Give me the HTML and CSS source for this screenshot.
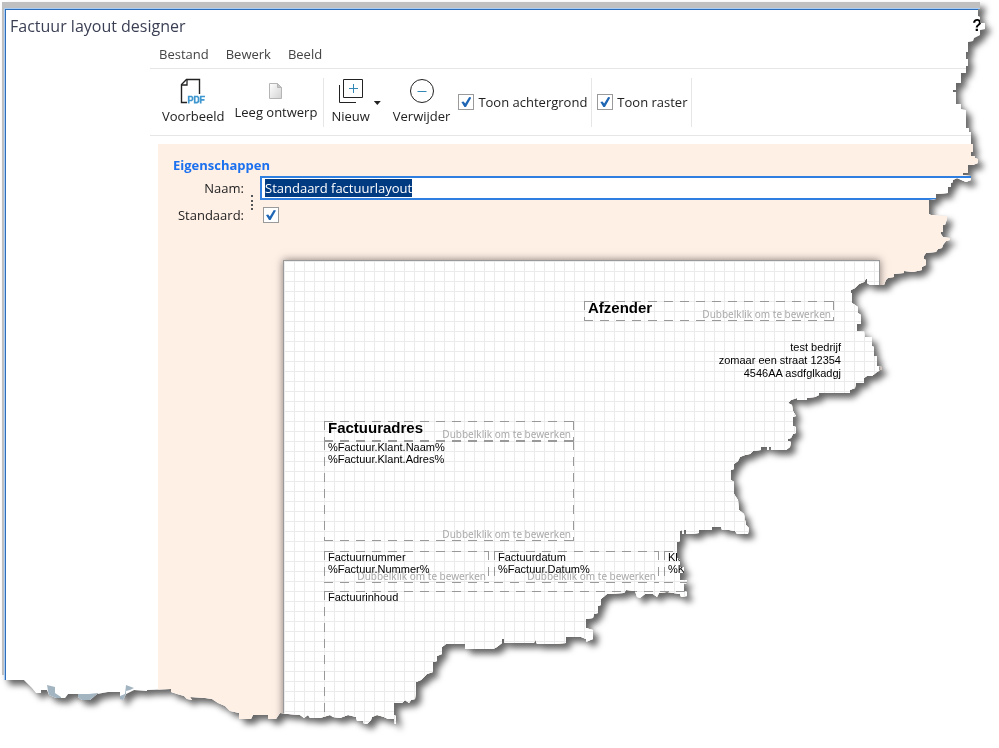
FILE: index.html
```html
<!DOCTYPE html>
<html lang="nl">
<head>
<meta charset="UTF-8">
<title>Factuur layout designer</title>
<link rel="stylesheet" href="styles.css">
</head>
<body>

<div class="shadow">
<div class="shell">
<div class="dialog">

  <header class="titlebar">
    <h1>Factuur layout designer</h1>
    <button class="help">?</button>
  </header>

  <main class="designer">
    <nav class="menu">
      <a href="#">Bestand</a>
      <a href="#">Bewerk</a>
      <a href="#">Beeld</a>
    </nav>

    <div class="toolbar">
      <div class="group group-file">
        <button class="tool">
          <svg width="26" height="26" viewBox="0 0 26 26" fill="none">
            <path d="M7 24.500H1.500V6.500L6.500 1.500H19.500V16" stroke="#222" stroke-width="1.400"/>
            <path d="M2 7H7V2" stroke="#222" stroke-width="1.300"/>
            <path d="M8.700 25.500V18.500H11.500L12.500 19.500V21.500L11.500 22.500H9M14.700 18.500V24.700H17L18.500 23.500V19.700L17.500 18.500ZM20.700 25.500V18.500H25M20.700 21.800H24.500" stroke="#3f97cf" stroke-width="1.700"/>
          </svg>
          <span>Voorbeeld</span>
        </button>
        <button class="tool tool-small">
          <svg width="14" height="18" viewBox="0 0 14 18">
            <defs><linearGradient id="vel" x1="0" y1="0" x2="1" y2="1"><stop offset="0" stop-color="#fff"/><stop offset="1" stop-color="#d2d2d2"/></linearGradient></defs>
            <path d="M.5 1.500H8.500L12.500 5.500V16.500H.5Z" fill="url(#vel)" stroke="#b5b5b5"/>
            <path d="M8.500 1.500V5.500H12.500Z" fill="#c4c4c4" stroke="#b5b5b5"/>
          </svg>
          <span>Leeg ontwerp</span>
        </button>
      </div>
      <div class="group group-edit">
        <button class="tool">
          <svg width="26" height="26" viewBox="0 0 26 26" fill="none">
            <path d="M5.500 1.500H24.500V19.500H5.500ZM1.500 7V24.500H18" stroke="#222"/>
            <path d="M15.500 6V15M11 10.500H20" stroke="#3387b5"/>
          </svg>
          <span>Nieuw</span>
        </button>
        <i class="arrow"></i>
        <button class="tool">
          <svg width="26" height="26" viewBox="0 0 26 26" fill="none">
            <circle cx="13" cy="13" r="11.500" stroke="#222"/>
            <path d="M8.500 13.500H17.500" stroke="#3387b5"/>
          </svg>
          <span>Verwijder</span>
        </button>
        <label class="check"><input type="checkbox" checked>Toon achtergrond</label>
      </div>
      <div class="group group-grid">
        <label class="check"><input type="checkbox" checked>Toon raster</label>
      </div>
    </div>

    <section class="work">
      <h2>Eigenschappen</h2>
      <div class="props">
        <label for="naam">Naam:</label>
        <input type="text" id="naam" value="Standaard factuurlayout">
        <label for="standaard">Standaard:</label>
        <input type="checkbox" id="standaard" checked>
        <i class="grip"></i>
      </div>

      <div class="paper">
        <div class="field afzender"><h3>Afzender</h3><small>Dubbelklik om te bewerken</small></div>
        <address>test bedrijf<br>zomaar een straat 12354<br>4546AA asdfglkadgj</address>
        <div class="field adreskop"><h3>Factuuradres</h3><small>Dubbelklik om te bewerken</small></div>
        <div class="field adres"><p>%Factuur.Klant.Naam%<br>%Factuur.Klant.Adres%</p><small>Dubbelklik om te bewerken</small></div>
        <div class="field nummer"><p>Factuurnummer<br>%Factuur.Nummer%</p><small>Dubbelklik om te bewerken</small></div>
        <div class="field datum"><p>Factuurdatum<br>%Factuur.Datum%</p><small>Dubbelklik om te bewerken</small></div>
        <div class="field klant"><p>Klantnummer<br>%Klant.Nummer%</p></div>
        <div class="field inhoud"><p>Factuurinhoud</p></div>
      </div>
    </section>
  </main>

  <svg class="scraps" width="90" height="26" viewBox="0 0 90 26" fill="#a3b5c1">
    <path d="M0 0L8 2V8L14 12V16H8L2 12Z"/>
    <path d="M31 9H42L51 8V20H31Z"/>
    <path d="M79 0L87 3L83 5L79 6V15H73V11L78 9Z"/>
  </svg>

</div>
</div>
</div>

<script>
// naam is meteen geselecteerd bij openen
const naam = document.getElementById("naam");
naam.focus();
naam.select();
</script>

</body>
</html>
```
FILE: styles.css
```css
* {
  box-sizing: border-box;
}

body {
  margin: 0;
  height: 100vh;
  overflow: hidden;
  background: #fff;
  font-family: "Open Sans", "Noto Sans", sans-serif;
  font-size: 13px;
  color: #222;
}

h1, h2, h3, p {
  margin: 0;
}

button {
  border: none;
  padding: 0;
  background: none;
  font: inherit;
  color: inherit;
}

/* torn edge with a shadow behind it */
.shadow {
  height: 100%;
  filter: drop-shadow(5px 5px 3px rgba(0,0,0,0.6));
}

.shell {
  height: 100%;
  padding: 9px 0 0 5px;
  background: #c0c0c0;
  clip-path: polygon(
    2px 2px, 980px 2px, 980px 9px, 978px 9px, 978px 16px, 980px 17px, 980px 23px, 985px 23px, 985px 29px, 980px 30px,
    980px 35px, 974px 38px, 973px 41px, 968px 42px, 968px 52px, 966px 52px, 966px 59px, 968px 59px, 968px 66px, 966px 66px,
    966px 73px, 961px 73px, 961px 83px, 956px 83px, 956px 90px, 953px 90px, 953px 92px, 956px 92px, 956px 104px, 961px 104px,
    961px 109px, 966px 110px, 966px 128px, 969px 128px, 969px 132px, 971px 132px, 971px 144px, 973px 144px, 973px 152px, 971px 152px,
    971px 156px, 975px 156px, 975px 158px, 978px 159px, 978px 163px, 973px 165px, 968px 165px, 968px 173px, 963px 173px, 963px 175px,
    971px 176px, 971px 180px, 966px 182px, 957px 178px, 953px 180px, 953px 182px, 951px 183px, 951px 187px, 948px 187px, 948px 193px,
    936px 194px, 936px 199px, 929px 200px, 929px 214px, 931px 215px, 947px 216px, 947px 219px, 945px 225px, 943px 225px, 943px 232px,
    941px 232px, 941px 234px, 943px 237px, 950px 238px, 950px 240px, 946px 241px, 943px 245px, 942px 248px, 938px 249px, 936px 252px,
    926px 253px, 924px 256px, 924px 259px, 926px 260px, 926px 265px, 922px 267px, 922px 270px, 913px 272px, 904px 271px, 904px 273px,
    894px 274px, 894px 277px, 888px 278px, 886px 280px, 884px 285px, 870px 285px, 867px 283px, 867px 279px, 866px 279px, 864px 282px,
    859px 284px, 855px 288px, 851px 290px, 851px 293px, 852px 293px, 852px 303px, 855px 305px, 858px 307px, 858px 313px, 861px 315px,
    861px 324px, 857px 324px, 857px 331px, 864px 331px, 865px 337px, 872px 337px, 872px 346px, 874px 347px, 874px 356px, 877px 356px,
    877px 366px, 882px 367px, 882px 369px, 877px 372px, 872px 376px, 867px 376px, 864px 378px, 864px 383px, 856px 383px, 855px 388px,
    850px 390px, 850px 393px, 819px 393px, 819px 395px, 815px 397px, 807px 398px, 807px 400px, 797px 400px, 797px 398px, 791px 400px,
    788px 403px, 792px 405px, 793px 411px, 796px 416px, 793px 417px, 793px 426px, 796px 427px, 796px 433px, 793px 434px, 791px 438px,
    788px 439px, 788px 441px, 791px 442px, 790px 447px, 786px 450px, 771px 450px, 771px 447px, 769px 447px, 769px 450px, 767px 450px,
    767px 447px, 761px 447px, 761px 450px, 753px 451px, 750px 454px, 745px 455px, 740px 457px, 738px 461px, 734px 464px, 734px 469px,
    731px 470px, 731px 480px, 734px 482px, 734px 494px, 738px 500px, 739px 510px, 744px 514px, 746px 525px, 749px 528px, 748px 534px,
    737px 534px, 735px 531px, 729px 530px, 722px 530px, 721px 527px, 712px 527px, 712px 530px, 699px 530px, 699px 533px, 692px 534px,
    686px 534px, 686px 530px, 684px 530px, 684px 534px, 682px 534px, 682px 530px, 680px 531px, 680px 541px, 677px 542px, 677px 558px,
    680px 560px, 680px 567px, 684px 567px, 684px 573px, 680px 573px, 680px 580px, 687px 580px, 687px 583px, 684px 584px, 684px 591px,
    687px 592px, 687px 596px, 681px 597px, 680px 594px, 667px 592px, 659px 593px, 657px 597px, 653px 594px, 645px 594px, 640px 598px,
    637px 597px, 635px 591px, 626px 590px, 624px 593px, 607px 594px, 601px 599px, 601px 605px, 598px 606px, 598px 613px, 594px 614px,
    593px 618px, 586px 619px, 586px 628px, 593px 630px, 593px 639px, 588px 641px, 586px 642px, 586px 639px, 581px 637px, 566px 637px,
    566px 643px, 555px 644px, 537px 644px, 535px 639px, 534px 643px, 504px 643px, 504px 639px, 502px 639px, 502px 643px, 497px 647px,
    493px 649px, 465px 649px, 465px 644px, 446px 644px, 442px 647px, 442px 654px, 437px 656px, 437px 661px, 433px 662px, 433px 672px,
    427px 674px, 421px 680px, 416px 682px, 416px 692px, 415px 699px, 411px 700px, 409px 703px, 405px 700px, 402px 703px, 394px 703px,
    394px 715px, 396px 716px, 396px 724px, 394px 724px, 394px 719px, 388px 719px, 384px 717px, 377px 715px, 372px 717px, 371px 720px,
    367px 724px, 364px 724px, 363px 721px, 357px 721px, 356px 717px, 348px 715px, 340px 718px, 333px 717px, 330px 715px, 320px 718px,
    310px 718px, 308px 715px, 304px 718px, 300px 715px, 288px 714px, 280px 713px, 278px 716px, 276px 719px, 268px 719px, 268px 715px,
    253px 715px, 251px 719px, 239px 719px, 239px 713px, 230px 711px, 225px 706px, 218px 703px, 212px 699px, 205px 698px, 190px 697px,
    192px 700px, 187px 699px, 184px 696px, 177px 694px, 171px 692px, 171px 689px, 147px 690px, 147px 691px, 134px 690px, 126px 694px,
    123px 700px, 120px 699px, 120px 692px, 108px 692px, 97px 694px, 90px 700px, 82px 700px, 78px 697px, 78px 694px,
    73px 694px, 68px 694px, 65px 698px, 56px 698px, 49px 695px, 47px 690px, 41px 690px, 41px 693px, 36px 693px, 32px 688px,
    28px 684px, 24px 680px, 4px 680px, 4px 675px, 2px 675px
  );
}

.dialog {
  position: relative;
  height: 100%;
  overflow: hidden;
  background: #fff;
  border: 1px solid #2e6db8;
  border-right: none;
  outline: 1px solid #a9cdf5;
}

.titlebar {
  display: flex;
  justify-content: space-between;
  align-items: center;
  height: 31px;
  padding: 0 17px 0 4px;
}

.titlebar h1 {
  font-size: 16px;
  font-weight: normal;
  color: #3b3f54;
}

.help {
  font-family: "Liberation Sans", Arial, sans-serif;
  font-size: 16px;
  font-weight: bold;
  color: #000;
}

.designer {
  margin-left: 144px;
}

/* menu + toolbar */
.menu {
  display: flex;
  gap: 17px;
  height: 28px;
  padding: 4px 9px 0;
  border-bottom: 1px solid #e6e6e6;
}

.menu a {
  color: #444;
  text-decoration: none;
}

.toolbar {
  display: flex;
  height: 67px;
  padding: 9px 0 8px;
  border-bottom: 1px solid #e6e6e6;
}

.group {
  display: flex;
  border-right: 1px solid #e6e6e6;
}

.group-file {
  gap: 10px;
  padding: 0 6px 0 12px;
}

.group-edit {
  padding: 0 4px 0 7px;
}

.group-grid {
  padding: 0 4px 0 5px;
}

.tool {
  display: flex;
  flex-direction: column;
  align-items: center;
  line-height: 18px;
  gap: 3px;
}

.tool-small {
  padding-top: 4px;
}

.arrow {
  margin: 23px 12px 0 4px;
  width: 7px;
  height: 4px;
  background: #222;
  clip-path: polygon(0 0, 100% 0, 50% 100%);
}

.check {
  display: flex;
  align-items: center;
  gap: 4px;
  padding-bottom: 1px;
}

.group-edit .check {
  margin-left: 8px;
}

input[type="checkbox"] {
  appearance: none;
  width: 16px;
  height: 16px;
  margin: 0;
  border: 1px solid #9a9a9a;
  background: #fff;
}

input[type="checkbox"]:checked::before {
  content: "";
  display: block;
  width: 10px;
  height: 10px;
  margin: 2px;
  background: #1f66b5;
  clip-path: polygon(0 50%, 22% 44%, 38% 66%, 78% 0, 100% 6%, 46% 100%, 30% 100%);
}

/* properties */
.work {
  margin: 8px 0 0 8px;
  padding: 11px 0 0 15px;
  background: #fff0e6;
}

.work h2 {
  font-size: 13px;
  line-height: 21px;
  color: #1a70ee;
}

.props {
  position: relative;
  display: grid;
  grid-template-columns: 71px 1fr;
  column-gap: 16px;
  row-gap: 4px;
  align-items: center;
  line-height: 22px;
}

.props label {
  text-align: right;
}

.props input[type="text"] {
  width: 100%;
  height: 24px;
  padding: 0 3px;
  border: 2px solid #2f7fe0;
  border-right: none;
  outline: none;
  background: #fff;
  font: inherit;
}

.props input[type="text"]::selection {
  background: #003a80;
  color: #fff;
}

.props input[type="checkbox"] {
  margin-left: 3px;
}

.grip {
  position: absolute;
  left: 78px;
  top: 19px;
  height: 15px;
  border-left: 2px dotted #555;
}

/* the page that is being designed */
.paper {
  position: relative;
  width: 597px;
  height: 842px;
  margin: 34px 0 0 110px;
  border: 1px solid #999;
  background-color: #fff;
  background-image:
    linear-gradient(#ebebeb 1px, transparent 1px),
    linear-gradient(90deg, #ebebeb 1px, transparent 1px);
  background-size: 10px 10px;
  background-position: 0 0;
  box-shadow: 0 0 8px rgba(0,0,0,0.5);
  font-family: "Liberation Sans", Arial, sans-serif;
  color: #000;
}

.field {
  position: absolute;
  padding: 0 4px;
  background:
    repeating-linear-gradient(90deg, #999 0 9px, transparent 9px 16px) 0 0 / 100% 1px no-repeat,
    repeating-linear-gradient(90deg, #999 0 9px, transparent 9px 16px) 0 100% / 100% 1px no-repeat,
    repeating-linear-gradient(#999 0 9px, transparent 9px 16px) 0 0 / 1px 100% no-repeat,
    repeating-linear-gradient(#999 0 9px, transparent 9px 16px) 100% 0 / 1px 100% no-repeat;
}

.field h3 {
  font-size: 15px;
  line-height: 13px;
}

.field p {
  font-size: 11px;
  line-height: 12px;
}

.field small {
  position: absolute;
  right: 3px;
  bottom: 0;
  font-family: "Noto Sans", "Open Sans", sans-serif;
  font-size: 10px;
  line-height: 13px;
  color: #aaa;
}

.afzender { left: 300px; top: 40px; width: 250px; height: 20px; }
.adreskop { left: 40px; top: 160px; width: 250px; height: 20px; }
.adres { left: 40px; top: 180px; width: 250px; height: 100px; }
.nummer { left: 40px; top: 290px; width: 165px; height: 32px; }
.datum { left: 210px; top: 290px; width: 165px; height: 32px; }
.klant { left: 380px; top: 290px; width: 165px; height: 32px; }
.inhoud { left: 40px; top: 330px; width: 505px; height: 320px; }

.paper address {
  position: absolute;
  right: 38px;
  top: 80px;
  font-size: 11px;
  font-style: normal;
  line-height: 13px;
  text-align: right;
}

.scraps {
  position: absolute;
  left: 41px;
  top: 675px;
}
```
